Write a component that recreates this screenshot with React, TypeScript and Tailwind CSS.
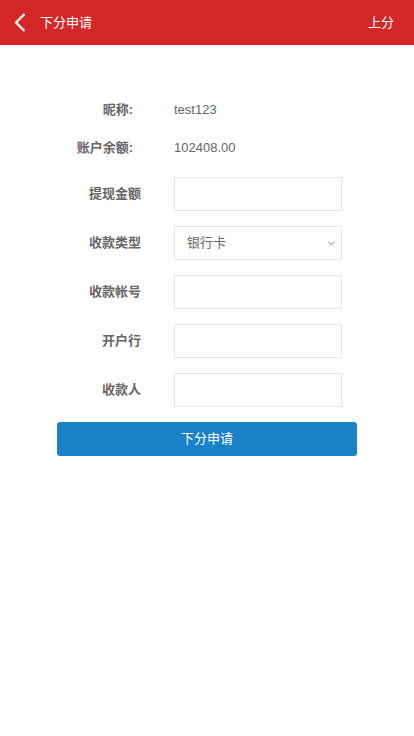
import { useState } from "react";

const font = { fontFamily: '"Liberation Sans", "Noto Sans CJK SC", sans-serif' };

const InputRow = ({ label, children }: { label: string; children: React.ReactNode }) => (
  <div className="flex items-center h-[34px] mb-[15px]">
    <label className="w-[84px] text-right text-[13px] font-bold text-[#666]">{label}</label>
    <div className="ml-[33px] w-[168px] h-[34px]">{children}</div>
  </div>
);

const App = () => {
  const [amount, setAmount] = useState("");
  const [type, setType] = useState("bank");
  const [account, setAccount] = useState("");
  const [bank, setBank] = useState("");
  const [payee, setPayee] = useState("");

  const inputCls =
    "w-full h-full border border-[#e5e5e5] bg-white px-3 text-[13px] text-[#666] outline-none";

  return (
    <div className="min-h-screen bg-white" style={font}>
      <div className="h-[45px] bg-[#d32728] flex items-center px-[14px] text-white">
        <svg width="12" height="19" viewBox="0 0 12 19" className="shrink-0">
          <path d="M10.5 1 L2 9.5 L10.5 18" fill="none" stroke="white" strokeWidth="2.2" />
        </svg>
        <span className="ml-[14px] text-[13px]">下分申请</span>
        <span className="ml-auto mr-[6px] text-[13px]">上分</span>
      </div>

      <div className="w-[300px] mx-auto pt-[54px]">
        <div className="flex items-center h-[22px]">
          <span className="w-[76px] text-right text-[13px] font-bold text-[#666]">昵称:</span>
          <span className="ml-[41px] text-[13px] text-[#666]">test123</span>
        </div>
        <div className="flex items-center h-[22px] mt-[16px] mb-[18px]">
          <span className="w-[76px] text-right text-[13px] font-bold text-[#666]">账户余额:</span>
          <span className="ml-[41px] text-[13px] text-[#666]">102408.00</span>
        </div>

        <InputRow label="提现金额">
          <input className={inputCls} value={amount} onChange={(e) => setAmount(e.target.value)} />
        </InputRow>
        <InputRow label="收款类型">
          <div className="relative w-full h-full">
            <select
              className={inputCls + " appearance-none"}
              value={type}
              onChange={(e) => setType(e.target.value)}
            >
              <option value="bank">银行卡</option>
            </select>
            <svg
              width="7"
              height="5"
              viewBox="0 0 7 5"
              className="absolute right-[7px] top-[15px] pointer-events-none"
            >
              <path d="M0.5 0.8 L3.5 3.8 L6.5 0.8" fill="none" stroke="#777" strokeWidth="1" />
            </svg>
          </div>
        </InputRow>
        <InputRow label="收款帐号">
          <input className={inputCls} value={account} onChange={(e) => setAccount(e.target.value)} />
        </InputRow>
        <InputRow label="开户行">
          <input className={inputCls} value={bank} onChange={(e) => setBank(e.target.value)} />
        </InputRow>
        <InputRow label="收款人">
          <input className={inputCls} value={payee} onChange={(e) => setPayee(e.target.value)} />
        </InputRow>

        <button className="w-full h-[34px] bg-[#1a83c7] text-white text-[13px] rounded-[3px]">
          下分申请
        </button>
      </div>
    </div>
  );
};

export default App;
